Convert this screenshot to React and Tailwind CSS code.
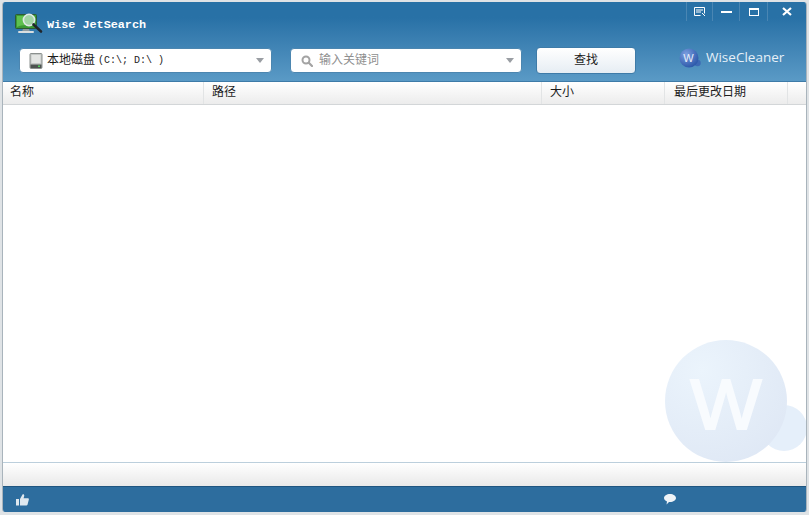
import React from "react";

const cjk = "font-['Liberation_Mono','Noto_Sans_CJK_SC',monospace]";

const Caret = () => (
	<svg width="8" height="5" viewBox="0 0 8 5">
		<path d="M0 0h8L4 5z" fill="#9a9ea3" />
	</svg>
);

const AppIcon = () => (
	<svg width="28" height="22" viewBox="0 0 28 22">
		<rect x="0.5" y="1.5" width="21" height="14" rx="1" fill="#3b9a35" stroke="#2c5a35" />
		<path d="M2 3h18v6c-6 4-12 2-18 5z" fill="#5fc04f" />
		<path d="M8 16h6l1 2.5H7z" fill="#8e9aa0" />
		<rect x="3" y="18" width="16" height="2" rx="1" fill="#d8dee0" />
		<circle cx="14" cy="7" r="5.6" fill="#b7dcc0" fillOpacity="0.75" stroke="#dfe9e6" strokeWidth="1.6" />
		<path d="M18.5 11.5L26 18.5" stroke="#20262c" strokeWidth="2.6" strokeLinecap="round" />
	</svg>
);

const DriveIcon = () => (
	<svg width="14" height="16" viewBox="0 0 14 16">
		<rect x="1" y="0.5" width="12" height="15" rx="1" fill="#c4c8c6" stroke="#8b908e" />
		<rect x="2.5" y="2" width="9" height="8" fill="#e3e5e3" />
		<rect x="1.5" y="11.5" width="11" height="3.5" fill="#4d5350" />
		<rect x="9" y="12.5" width="2" height="1.5" fill="#55d060" />
	</svg>
);

const SearchIcon = () => (
	<svg width="12" height="12" viewBox="0 0 12 12" fill="none">
		<circle cx="5" cy="5" r="3.5" stroke="#a3a3a3" strokeWidth="2" />
		<path d="M7.8 7.8L11 11" stroke="#a3a3a3" strokeWidth="2.2" strokeLinecap="round" />
	</svg>
);

const WindowButton = ({ children, width }) => (
	<div className={`h-[19px] flex items-center justify-center border-l border-[#4a86b3] ${width}`}>
		{children}
	</div>
);

const columns = [
	{ label: "名称", width: "w-[201px] pl-[7px]" },
	{ label: "路径", width: "w-[338px] pl-[8px]" },
	{ label: "大小", width: "w-[123px] pl-[8px]" },
	{ label: "最后更改日期", width: "w-[123px] pl-[9px]" },
];

const App = () => {
	return (
		<div className={`w-[809px] h-[515px] bg-[#dfe3e6] p-[2px] ${cjk}`}>
			<div className="relative w-[805px] h-[510px] flex flex-col overflow-hidden rounded-[3px] bg-white border-x border-[#a9b4bc]">
				{/* title bar */}
				<div className="h-[80px] shrink-0 flex flex-col bg-gradient-to-b from-[#2871a6] from-20% to-[#5a9ac6] border-b border-[#3e7ba8]">
					<div className="h-[42px] flex items-start">
						<div className="ml-[12px] mt-[11px]">
							<AppIcon />
						</div>
						<span className="ml-[4px] mt-[16px] text-[11.8px] leading-[14px] font-bold text-white font-['Liberation_Mono',monospace]">
							Wise JetSearch
						</span>
						<div className="ml-auto flex">
							<WindowButton width="w-[26px]">
								<svg width="11" height="9" viewBox="0 0 11 9" fill="none">
									<path d="M0.5 0.5h10v6M0.5 0.5v8h6M2 3h7M2 5h5" stroke="#fff" />
									<path d="M8 6l3 3" stroke="#fff" />
								</svg>
							</WindowButton>
							<WindowButton width="w-[27px]">
								<div className="w-[11px] h-[2px] bg-white" />
							</WindowButton>
							<WindowButton width="w-[28px]">
								<div className="w-[10px] h-[8px] border border-t-2 border-white" />
							</WindowButton>
							<WindowButton width="w-[39px]">
								<svg width="10" height="9" viewBox="0 0 10 9">
									<path d="M1 1l8 7M9 1L1 8" stroke="#fff" strokeWidth="2.200" />
								</svg>
							</WindowButton>
						</div>
					</div>
					<div className="flex items-center h-[27px] mt-[3px]">
						<div className="ml-[16px] w-[253px] h-[25px] flex items-center bg-white rounded-[4px] border border-[#4c86b0] text-[12px] text-[#1c1c1c] pl-[9px] pr-[7px]">
							<DriveIcon />
							<span className="ml-[4px] whitespace-nowrap">本地磁盘</span>
							<span className="ml-[3px] text-[10px] whitespace-nowrap">(C:\; D:\ )</span>
							<div className="ml-auto">
								<Caret />
							</div>
						</div>
						<div className="ml-[18px] w-[232px] h-[25px] flex items-center bg-white rounded-[4px] border border-[#4c86b0] text-[12px] text-[#8f8f8f] pl-[10px] pr-[7px]">
							<SearchIcon />
							<span className="ml-[6px]">输入关键词</span>
							<div className="ml-auto">
								<Caret />
							</div>
						</div>
						<div className="ml-[14px] w-[100px] h-[27px] flex items-center justify-center rounded-[4px] border border-[#3e7ba8] bg-gradient-to-b from-white to-[#e6edf3] text-[12px] text-[#1c1c1c]">
							查找
						</div>
						<div className="ml-[43px] mb-[6px] flex items-center">
							<svg width="22" height="20" viewBox="0 0 22 20">
								<defs>
									<radialGradient id="logoBall" cx="35%" cy="30%" r="75%">
										<stop offset="0" stopColor="#7c9fe0" />
										<stop offset="1" stopColor="#2a56a8" />
									</radialGradient>
								</defs>
								<circle cx="18.500" cy="15" r="3.200" fill="#3c68b4" />
								<circle cx="10" cy="10" r="9.500" fill="url(#logoBall)" />
								<text x="9.500" y="14" textAnchor="middle" fontSize="11" fill="#e8eefa" fontFamily="Liberation Sans">W</text>
							</svg>
							<span className="ml-[5px] text-[13.5px] leading-none text-[#e6f0f8] font-['Open_Sans',sans-serif] whitespace-nowrap">
								WiseCleaner
							</span>
						</div>
					</div>
				</div>

				{/* list header */}
				<div className="h-[23px] shrink-0 flex bg-gradient-to-b from-white to-[#ececec] border-b border-[#d3d6d8] text-[12px] text-[#1c1c1c]">
					{columns.map((col) => (
						<div key={col.label} className={`${col.width} shrink-0 flex items-center border-r border-[#e2e4e5] whitespace-nowrap`}>
							{col.label}
						</div>
					))}
				</div>

				{/* result list */}
				<div className="flex-1 bg-white" />

				{/* status strip */}
				<div className="h-[24px] shrink-0 bg-gradient-to-b from-white to-[#e9e9e9] border-t border-[#bccfdc]" />

				{/* footer */}
				<div className="h-[26px] shrink-0 flex items-center bg-[#2d6d9e] border-t border-[#1f5580]">
					<svg className="ml-[13px]" width="13" height="12" viewBox="0 0 13 12">
						<path d="M0 5h3v6.500H0zM4 5l2.500-4.500c1-.6 2 .2 1.700 1.400L7.600 4.200h4.200c.9 0 1.300.8 1 1.500l-1.300 5.100c-.2.5-.6.8-1.100.8H4z" fill="#dfe8ef" />
					</svg>
					<svg className="ml-[635px]" width="12" height="11" viewBox="0 0 12 11">
						<path d="M6 0c3.300 0 6 1.800 6 4s-2.700 4-6 4H5l-2.500 2.500L3 7.500C1.200 6.800 0 5.500 0 4c0-2.200 2.700-4 6-4z" fill="#eef3f7" />
					</svg>
				</div>

				{/* watermark */}
				<svg className="absolute left-[662px] top-[338px]" width="142" height="122" viewBox="0 0 142 122">
					<defs>
						<radialGradient id="markBall" cx="30%" cy="25%" r="85%">
							<stop offset="0" stopColor="#ebf4fc" />
							<stop offset="1" stopColor="#dfe8f5" />
						</radialGradient>
					</defs>
					<circle cx="119" cy="88" r="23" fill="#e5effa" />
					<circle cx="61" cy="61" r="61" fill="url(#markBall)" />
					<text x="61" y="89" textAnchor="middle" fontSize="71" textLength="71" lengthAdjust="spacingAndGlyphs" fill="#f8fbfe" stroke="#f8fbfe" strokeWidth="2" fontFamily="Liberation Sans">W</text>
				</svg>
			</div>
		</div>
	);
};

export default App;
